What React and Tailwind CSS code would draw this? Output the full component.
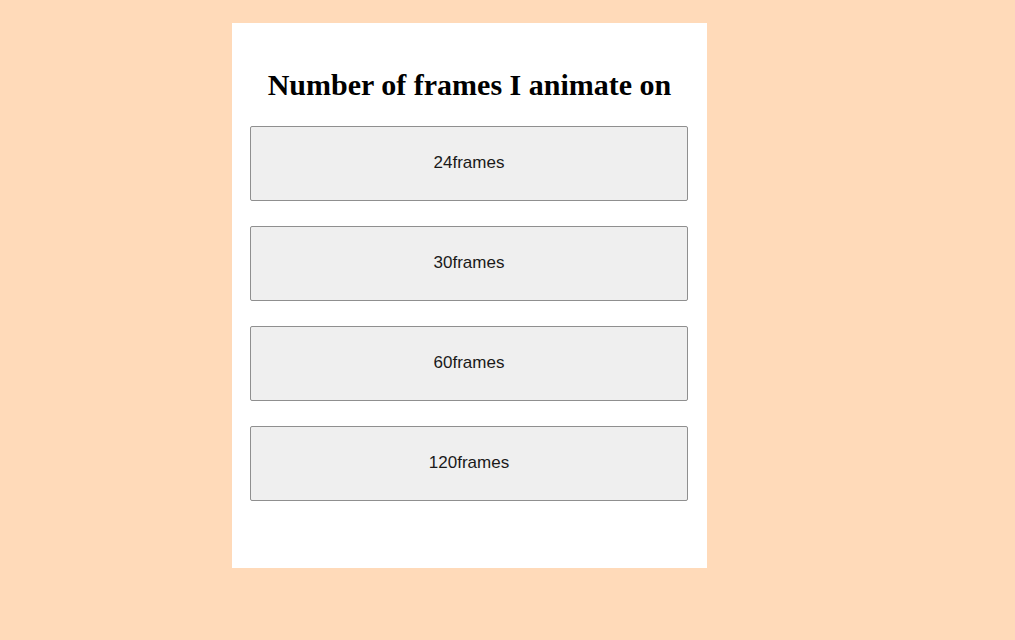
export default function App() {
  const items = ["24frames", "30frames", "60frames", "120frames"];
  return (
    <div className="min-h-[640px] w-full bg-[#FFDAB9]">
      <div className="pt-[23px] pl-[232px]">
        <div className="flex h-[545px] w-[475px] flex-col items-center bg-white px-[18px]">
          <h1
            className="mt-[44px] mb-[23px] h-[36px] text-center text-[30px] font-bold leading-[36px] text-black"
            style={{ fontFamily: '"Liberation Serif", "Times New Roman", serif' }}
          >
            Number of frames I animate on
          </h1>
          <div className="flex w-[438px] flex-col gap-[25px] self-start">
            {items.map((t) => (
              <button
                key={t}
                className="flex h-[75px] w-[438px] items-center justify-center rounded-[2px] border border-[#8f8f8f] bg-[#efefef] pb-[2px] text-[17px] text-[#1a1a1a]"
                style={{ fontFamily: '"Liberation Sans", Arial, sans-serif' }}
              >
                {t}
              </button>
            ))}
          </div>
        </div>
      </div>
    </div>
  );
}
